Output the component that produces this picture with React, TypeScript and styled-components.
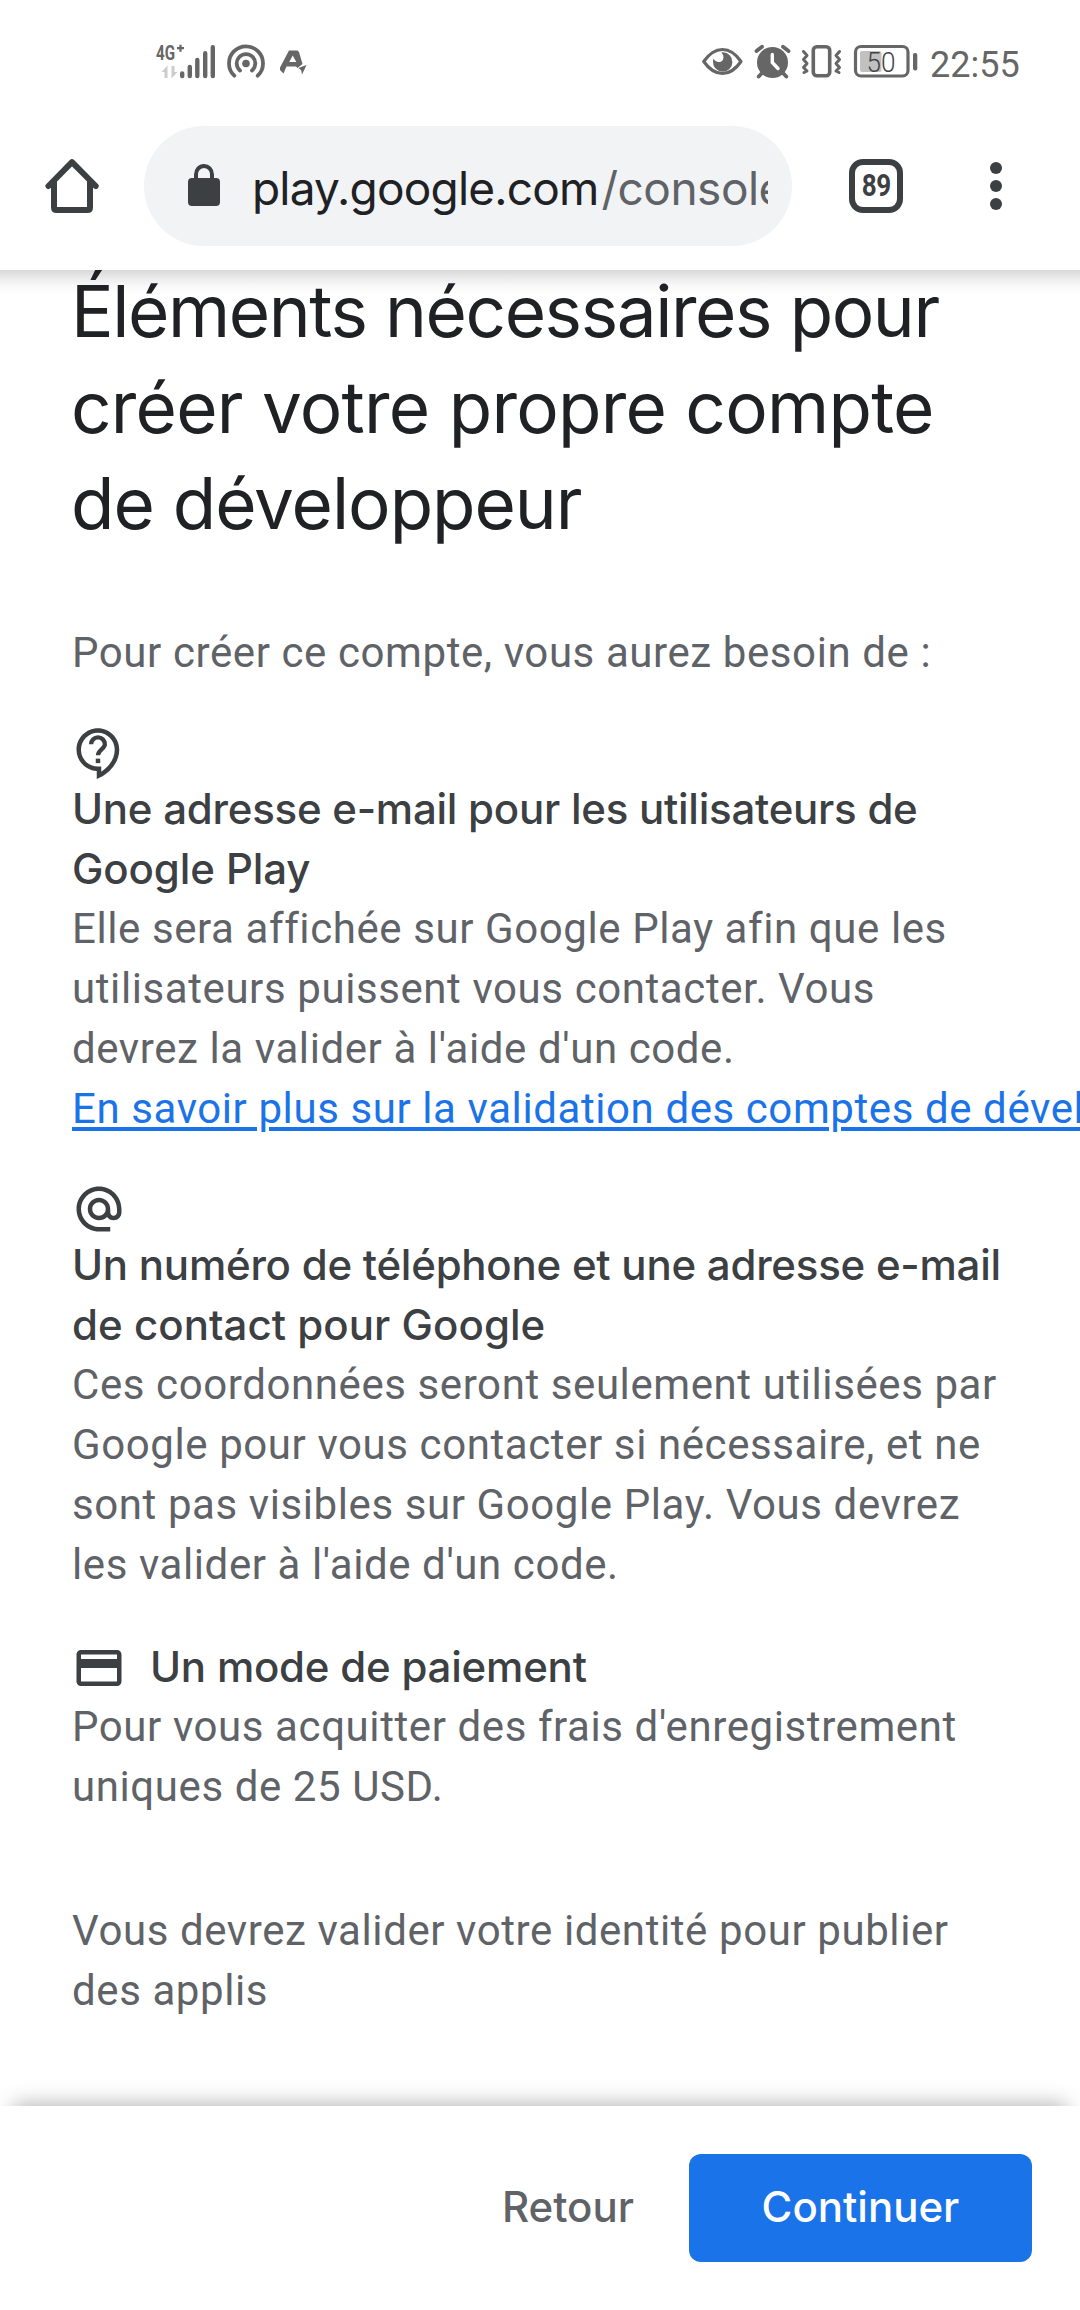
import React from "react";
import styled, { createGlobalStyle } from "styled-components";
import { MdAlternateEmail, MdOutlineCreditCard } from "react-icons/md";

const GlobalStyle = createGlobalStyle`
  * { box-sizing: border-box; }
  body { margin: 0; background: #fff; }
`;

const display = `"Inter", "Roboto", sans-serif`;
const body = `"Roboto", "Noto Sans", sans-serif`;

const Screen = styled.div`
  display: flex;
  flex-direction: column;
  width: 1080px;
  height: 2310px;
  overflow: hidden;
  background: #fff;
  font-family: ${body};
`;

const BrowserTop = styled.header`
  position: relative;
  z-index: 1;
  flex: none;
  height: 270px;
  background: #fff;
`;

const HeaderShadow = styled.div`
  flex: none;
  height: 24px;
  margin-bottom: -24px;
  background: linear-gradient(#d8d8d8, #e9e9e9 30%, #f8f8f8 65%, #fff);
`;

const StatusBar = styled.div`
  display: flex;
  align-items: center;
  justify-content: space-between;
  height: 122px;
  padding: 0 60px 0 156px;
  color: #666;
`;

const StatusGroup = styled.div`
  display: flex;
  align-items: center;
`;

const StatusIcon = styled.svg<{ $gap?: number }>`
  flex: none;
  height: 36px;
  margin-left: ${({ $gap = 0 }) => $gap}px;
  overflow: visible;
  fill: currentColor;
`;

const Clock = styled.span`
  width: 90px;
  margin-left: 12px;
  padding-top: 7px;
  font-size: 36px;
  line-height: 40px;
  white-space: nowrap;
`;

const Toolbar = styled.div`
  display: flex;
  align-items: center;
  height: 128px;
  padding: 0 76px 0 45px;
  color: #3c4043;
`;

const HomeIcon = styled.svg`
  flex: none;
  width: 54px;
  height: 54px;
`;

const AddressPill = styled.div`
  display: flex;
  align-items: center;
  flex: none;
  width: 648px;
  height: 120px;
  margin-left: 45px;
  padding: 0 24px 0 44px;
  border-radius: 60px;
  background: #f1f3f4;
`;

const LockIcon = styled.svg`
  flex: none;
  width: 32px;
  height: 42px;
  margin-top: -2px;
`;

const Url = styled.div`
  flex: 1;
  margin-left: 32px;
  overflow: hidden;
  color: #202124;
  font-family: ${display};
  font-size: 46px;
  line-height: 64px;
  letter-spacing: -0.8px;
  white-space: nowrap;
  padding-top: 4px;
`;

const UrlPath = styled.span`
  margin-left: 3px;
  color: #5f6368;
  letter-spacing: -0.5px;
`;

const TabCount = styled.div`
  display: flex;
  align-items: center;
  justify-content: center;
  flex: none;
  width: 54px;
  height: 54px;
  margin-left: 57px;
  border: 6px solid #3c4043;
  border-radius: 14px;
`;

const TabNumber = styled.span`
  font-size: 31px;
  font-weight: 700;
  line-height: 40px;
  letter-spacing: -0.5px;
  transform: scaleX(0.84);
`;

const Menu = styled.div`
  display: flex;
  flex-direction: column;
  gap: 6px;
  margin-left: 87px;
`;

const Dot = styled.i`
  width: 12px;
  height: 12px;
  border-radius: 50%;
  background: #3c4043;
`;

const Content = styled.main`
  flex: 1;
  min-height: 0;
  padding: 0 72px;
`;

const Heading = styled.h1`
  margin: -7px 0 72px -1px;
  color: #202124;
  font-family: ${display};
  font-size: 71px;
  font-weight: 400;
  line-height: 96px;
`;

const Line = styled.span<{ $track?: number }>`
  display: block;
  letter-spacing: ${({ $track }) => ($track === undefined ? "inherit" : `${$track}px`)};
  white-space: nowrap;
`;

const Text = styled.p`
  margin: 0;
  color: #5f6368;
  font-size: 42px;
  line-height: 60px;
  letter-spacing: 0.59px;
`;

const Requirement = styled.section`
  margin-top: 44px;
`;

const IconRow = styled.div`
  display: flex;
  height: 52px;
  color: #3c4043;
  font-size: 54px;

  svg {
    flex: none;
    margin-top: -1px;
  }
`;

const TitleRow = styled.div`
  display: flex;
  align-items: center;
  gap: 24px;
  height: 60px;
  margin-top: -2px;
  color: #3c4043;

  svg {
    flex: none;
    margin-top: 1px;
    font-size: 54px;
  }
`;

const Title = styled.h2`
  margin: 0;
  color: #3c4043;
  font-family: ${display};
  font-size: 42px;
  font-weight: 500;
  line-height: 60px;
`;

const Link = styled.a`
  color: #1a73e8;
  text-decoration: underline;
  text-decoration-thickness: 4px;
  text-underline-offset: 4px;
  white-space: nowrap;
`;

const Note = styled.div`
  margin-top: 84px;
`;

const Footer = styled.footer`
  position: relative;
  z-index: 1;
  display: flex;
  align-items: flex-start;
  justify-content: flex-end;
  gap: 55px;
  flex: none;
  height: 204px;
  padding: 48px;
  background: #fff;
  box-shadow:
    0 -16px 18px -14px rgba(0, 0, 0, 0.24),
    0 -12px 28px -10px rgba(0, 0, 0, 0.07);
`;

const Button = styled.button<{ $primary?: boolean }>`
  width: ${({ $primary }) => ($primary ? "343px" : "auto")};
  height: 108px;
  padding: 0 0 4px;
  border: 0;
  border-radius: 12px;
  background: ${({ $primary }) => ($primary ? "#1a73e8" : "transparent")};
  color: ${({ $primary }) => ($primary ? "#fff" : "#5f6368")};
  font-family: ${display};
  font-size: 42px;
  font-weight: 500;
`;

const Signal = () => (
  <StatusIcon width="60" viewBox="156 43 60 36">
    <text x="156" y="60" fontFamily="Roboto" fontWeight="700" fontSize="20.5" textLength="19" lengthAdjust="spacingAndGlyphs">4G</text>
    <path d="M177 48.2h7M180.500 44.800v7" stroke="currentColor" strokeWidth="2.200" />
    <path d="M161.500 72l6-6.500V78h-3v-6zM177.500 72l-6 6.500V66h3v6z" fill="#ccc" />
    <path d="M182.200 73.500v2.500M189.800 67v9M197.300 60v16M205.200 53.200V76M212.800 47.200V76" stroke="currentColor" strokeWidth="4.400" strokeLinecap="round" />
  </StatusIcon>
);

const Hotspot = () => (
  <StatusIcon width="40" viewBox="226 43 40 36" $gap={10}>
    <circle cx="246" cy="63.500" r="3.800" />
    <path d="M234.300 75.700a17 17 0 1 1 23.400 0M240 70.500a9.300 9.300 0 1 1 12 0" fill="none" stroke="currentColor" strokeWidth="3.800" strokeLinecap="round" />
  </StatusIcon>
);

const LetterBadge = () => (
  <StatusIcon width="26" viewBox="280 43 26 36" $gap={14}>
    <path fillRule="evenodd" d="M289 50.500h8.500l1.500 1.500 3.500 12-5 4-1.500-1.500h-9.500l-3 7-3.500-3.500v-2.500zM292.700 55.500L289.300 62h7z" />
    <path d="M298.500 68l8-3-4.500 9.500-.8-4.200z" />
  </StatusIcon>
);

const Eye = () => (
  <StatusIcon width="40" viewBox="702 43 40 36">
    <path d="M703.700 61.500C715 45.500 730 45.500 741 61.500 730 77.500 715 77.500 703.700 61.500z" fill="none" stroke="currentColor" strokeWidth="3.200" strokeLinejoin="round" />
    <path d="M723 52.300a9.700 9.700 0 1 1-10 9.700c0-1.500.3-2.500.7-3.500 1 4 7.500 5 9.300 1 1.200-2.700.2-5-1.800-7z" />
  </StatusIcon>
);

const Alarm = () => (
  <StatusIcon width="37" viewBox="754 43 37 36" $gap={12}>
    <circle cx="772.500" cy="62.500" r="15.500" />
    <path d="M756.500 51l5.500-4.300M788.500 51l-5.500-4.300M762 73l-3.300 3.500M783 73l3.300 3.500" stroke="currentColor" strokeWidth="3.800" strokeLinecap="round" />
    <path d="M772.300 54.500v8l5.700 6" fill="none" stroke="#fff" strokeWidth="3.400" strokeLinecap="round" />
  </StatusIcon>
);

const Vibrate = () => (
  <StatusIcon width="43" viewBox="800 43 43 36" $gap={9}>
    <g fill="none" stroke="currentColor" strokeWidth="3.600" strokeLinecap="round" strokeLinejoin="round">
      <rect x="813.300" y="46.800" width="16.400" height="29" rx="3.500" />
      <path d="M803.500 51.500l3.500 4-3.500 4 3.500 4-3.500 4 3.500 3.500-3 1.500M839.500 51.500l-3.500 4 3.500 4-3.500 4 3.500 4-3.500 3.500 3 1.500" strokeWidth="3" />
    </g>
  </StatusIcon>
);

const Battery = () => (
  <StatusIcon width="64" viewBox="854 43 64 36" $gap={11}>
    <rect x="855.500" y="46.500" width="52.500" height="29.500" rx="5.500" fill="none" stroke="currentColor" strokeWidth="3.200" />
    <rect x="860" y="51" width="21.500" height="21" rx="2" fill="#c1c1c1" />
    <rect x="913" y="53" width="4.300" height="17.500" rx="2" />
    <text x="866.500" y="71.500" fontFamily="Roboto" fontWeight="300" fontSize="27" textLength="29" lengthAdjust="spacingAndGlyphs" fill="#444">50</text>
  </StatusIcon>
);

const SupportIcon = () => (
  <svg width="1em" height="1em" viewBox="0 0 24 24" fill="currentColor">
    <path d="M11 23.590v-3.600c-5.010-.26-9-4.420-9-9.490C2 5.260 6.260 1 11.500 1S21 5.260 21 10.500c0 4.950-3.440 9.930-8.570 12.400l-1.430.69zM11.500 3C7.360 3 4 6.360 4 10.500S7.360 18 11.500 18H13v2.300c3.640-2.300 6-6.080 6-9.800C19 6.360 15.640 3 11.500 3z" />
    <path d="M8.500 8.100a3.050 3.050 0 0 1 6.100 0c0 2.100-3.050 2.500-3.050 4.900" fill="none" stroke="currentColor" strokeWidth="1.900" />
    <path d="M10.550 14.500h2v2h-2z" />
  </svg>
);

export default function App() {
  return (
    <>
      <GlobalStyle />
      <Screen>
        <BrowserTop>
          <StatusBar>
            <StatusGroup>
              <Signal />
              <Hotspot />
              <LetterBadge />
            </StatusGroup>
            <StatusGroup>
              <Eye />
              <Alarm />
              <Vibrate />
              <Battery />
              <Clock>22:55</Clock>
            </StatusGroup>
          </StatusBar>
          <Toolbar>
            <HomeIcon viewBox="45 159 54 54" fill="none" stroke="currentColor" strokeWidth="6" strokeLinecap="round" strokeLinejoin="round">
              <path d="M48.500 186L72 162.200 95.700 186" />
              <path d="M54 182v25.500q0 2.500 2.500 2.500h31q2.500 0 2.500-2.500V182" />
            </HomeIcon>
            <AddressPill>
              <LockIcon viewBox="0 0 32 42">
                <path d="M8 16V10.500a8 8.500 0 0 1 16 0V16" fill="none" stroke="currentColor" strokeWidth="4" />
                <rect y="14" width="32" height="28" rx="4" fill="currentColor" />
              </LockIcon>
              <Url>play.google.com<UrlPath>/console</UrlPath></Url>
            </AddressPill>
            <TabCount><TabNumber>89</TabNumber></TabCount>
            <Menu><Dot /><Dot /><Dot /></Menu>
          </Toolbar>
        </BrowserTop>
        <HeaderShadow />

        <Content>
          <Heading>
            <Line $track={-1.42}>Éléments nécessaires pour</Line>
            <Line $track={-0.76}>créer votre propre compte</Line>
            <Line $track={-1.04}>de développeur</Line>
          </Heading>
          <Text>Pour créer ce compte, vous aurez besoin de :</Text>

          <Requirement>
            <IconRow><SupportIcon /></IconRow>
            <Title>
              <Line $track={-0.25}>Une adresse e-mail pour les utilisateurs de</Line>
              <Line $track={-0.1}>Google Play</Line>
            </Title>
            <Text>
              <Line>Elle sera affichée sur Google Play afin que les</Line>
              <Line>utilisateurs puissent vous contacter. Vous</Line>
              <Line>devrez la valider à l'aide d'un code.</Line>
              <Link>En savoir plus sur la validation des comptes de développeur</Link>
            </Text>
          </Requirement>

          <Requirement>
            <IconRow><MdAlternateEmail /></IconRow>
            <Title>
              <Line $track={-0.24}>Un numéro de téléphone et une adresse e-mail</Line>
              <Line $track={0.05}>de contact pour Google</Line>
            </Title>
            <Text>
              <Line>Ces coordonnées seront seulement utilisées par</Line>
              <Line>Google pour vous contacter si nécessaire, et ne</Line>
              <Line>sont pas visibles sur Google Play. Vous devrez</Line>
              <Line>les valider à l'aide d'un code.</Line>
            </Text>
          </Requirement>

          <Requirement>
            <TitleRow>
              <MdOutlineCreditCard />
              <Title><Line $track={-0.22}>Un mode de paiement</Line></Title>
            </TitleRow>
            <Text>
              <Line>Pour vous acquitter des frais d'enregistrement</Line>
              <Line>uniques de 25 USD.</Line>
            </Text>
          </Requirement>

          <Note>
            <Text>
              <Line>Vous devrez valider votre identité pour publier</Line>
              <Line>des applis</Line>
            </Text>
          </Note>
        </Content>

        <Footer>
          <Button>Retour</Button>
          <Button $primary>Continuer</Button>
        </Footer>
      </Screen>
    </>
  );
}
